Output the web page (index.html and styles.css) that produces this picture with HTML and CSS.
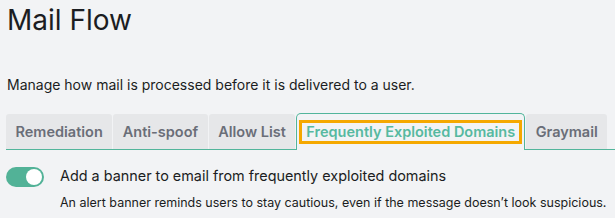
FILE: index.html
```html
<!DOCTYPE html>
<html>
<head>
<meta charset="utf-8">
<link rel="stylesheet" href="styles.css">
</head>
<body>
<div class="page">
  <h1 class="title">Mail Flow</h1>
  <p class="desc">Manage how mail is processed before it is delivered to a user.</p>
  <div class="tabs">
    <div class="tab">Remediation</div>
    <div class="tab">Anti-spoof</div>
    <div class="tab">Allow List</div>
    <div class="tab active"><span class="focus">Frequently Exploited Domains</span></div>
    <div class="tab">Graymail</div>
  </div>
  <div class="setting">
    <div class="toggle"><div class="knob"></div></div>
    <div class="texts">
      <div class="label">Add a banner to email from frequently exploited domains</div>
      <div class="help">An alert banner reminds users to stay cautious, even if the message doesn’t look suspicious.</div>
    </div>
  </div>
</div>
</body>
</html>
```
FILE: styles.css
```css
html, body { margin: 0; padding: 0; background: #f2f3f5; }
body { font-family: Inter, "Noto Sans", sans-serif; color: #1b1d22; }
.page { padding: 0 0 0 7px; }
.title { margin: 0; padding-top: 3px; font-size: 28px; font-weight: 400; line-height: 34px; }
.desc { margin: 38px 0 0; font-size: 14px; line-height: 20px; }
.tabs { display: flex; margin: 18px 0 0 -1px; border-bottom: 1px solid #52b59b; height: 36px; }
.tab { background: #e6e7e9; color: #6a6e78; font-size: 14.5px; font-weight: 600; padding: 0 9.5px; display: flex; align-items: center; height: 35px; margin-top: 1px; margin-right: 1px; border-radius: 3px 3px 0 0; }
.tab.active { background: #f2f3f5; border: 1px solid #52b59b; border-bottom: none; height: 36px; margin-top: 0; margin-bottom: -1px; color: #56b9a0; padding: 0 2px; border-radius: 5px 5px 0 0; }
.focus { border: 3px solid #f5a800; padding: 1px 4px; line-height: 16px; }
.setting { display: flex; align-items: flex-start; margin-top: 17px; }
.toggle { width: 38px; height: 20px; border-radius: 10px; background: #52b297; position: relative; margin-left: -1px; flex: none; }
.knob { position: absolute; right: 2px; top: 2px; width: 16px; height: 16px; border-radius: 50%; background: #fff; }
.texts { margin-left: 16px; }
.label { font-size: 14.4px; line-height: 18px; margin-top: 0; }
.help { font-size: 12.5px; line-height: 16px; margin-top: 10px; }
```
